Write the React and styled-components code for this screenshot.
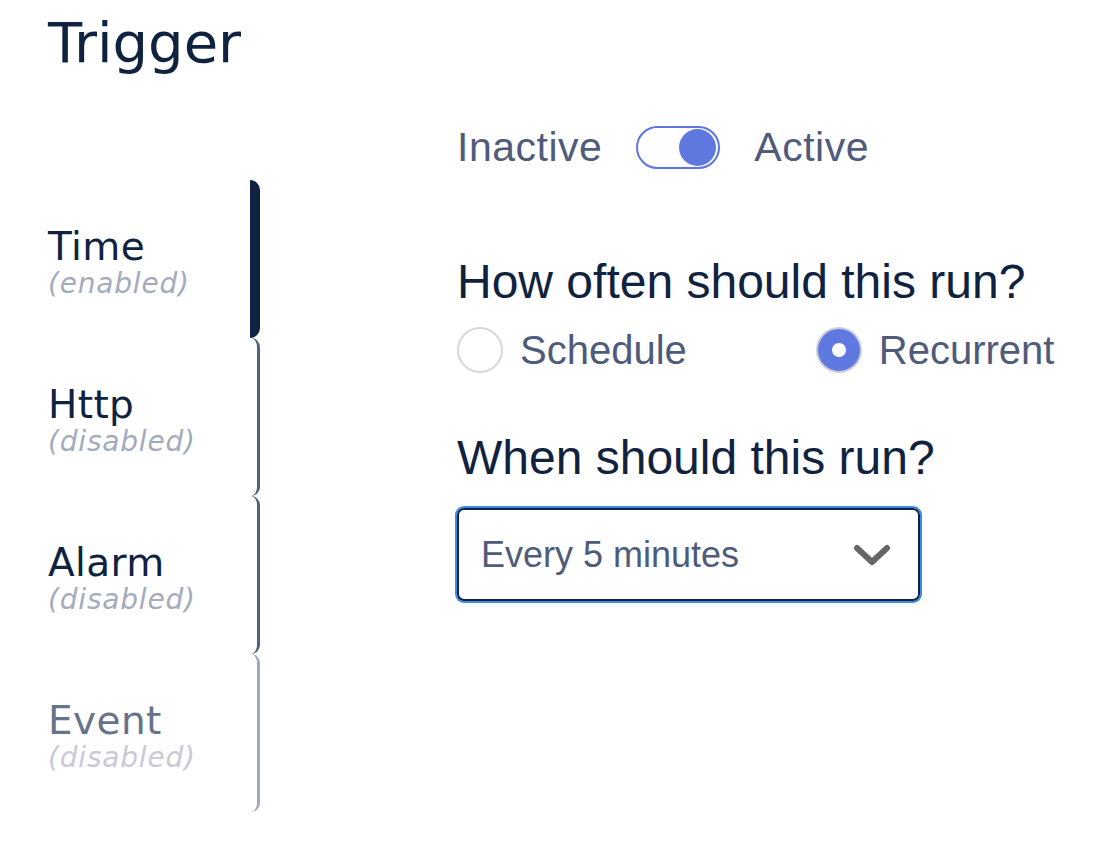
import React, { useState } from 'react'
import styled, { createGlobalStyle } from 'styled-components'

const GlobalStyle = createGlobalStyle`
    body {
        margin: 0;
        background: #ffffff;
    }
`

const tabs = [
    { name: 'Time', status: 'enabled', tone: 'active' },
    { name: 'Http', status: 'disabled', tone: 'normal' },
    { name: 'Alarm', status: 'disabled', tone: 'normal' },
    { name: 'Event', status: 'disabled', tone: 'muted' },
]

const App = () => {
    const [active, setActive] = useState(true)
    const [mode, setMode] = useState('recurrent')

    return (
        <Page>
            <GlobalStyle />
            <Title>Trigger</Title>
            <Body>
                <Nav>
                    {tabs.map(tab => (
                        <Tab key={tab.name} tone={tab.tone}>
                            <TabName tone={tab.tone}>{tab.name}</TabName>
                            <TabStatus tone={tab.tone}>({tab.status})</TabStatus>
                        </Tab>
                    ))}
                </Nav>
                <Content>
                    <ToggleRow>
                        <ToggleLabel>Inactive</ToggleLabel>
                        <Toggle on={active} onClick={() => setActive(!active)}>
                            <Knob on={active} />
                        </Toggle>
                        <ToggleLabel>Active</ToggleLabel>
                    </ToggleRow>

                    <Question>How often should this run?</Question>
                    <RadioRow>
                        <RadioOption onClick={() => setMode('schedule')}>
                            <RadioCircle checked={mode === 'schedule'} />
                            Schedule
                        </RadioOption>
                        <RadioOption onClick={() => setMode('recurrent')}>
                            <RadioCircle checked={mode === 'recurrent'} />
                            Recurrent
                        </RadioOption>
                    </RadioRow>

                    <Question second>When should this run?</Question>
                    <Select>
                        <SelectValue>Every 5 minutes</SelectValue>
                        <svg width="40" height="26" viewBox="0 0 40 26">
                            <polyline
                                points="5,6 20,20 35,6"
                                fill="none"
                                stroke="#666666"
                                strokeWidth="6"
                                strokeLinecap="round"
                                strokeLinejoin="round"
                            />
                        </svg>
                    </Select>
                </Content>
            </Body>
        </Page>
    )
}

export default App

const navFont = `"DejaVu Sans", "Noto Sans", sans-serif`
const formFont = `"Liberation Sans", Arial, sans-serif`

const Page = styled.div`
    padding: 11px 48px 0;
    color: #0f2340;
`
const Title = styled.h1`
    margin: 0;
    font-family: ${navFont};
    font-weight: 400;
    font-size: 56px;
    line-height: 64px;
    color: #0f2340;
`
const Body = styled.div`
    display: flex;
    align-items: flex-start;
`
const Nav = styled.div`
    width: 212px;
    padding-top: 105px;
    display: flex;
    flex-direction: column;
`
const Tab = styled.div`
    height: 158px;
    box-sizing: border-box;
    display: flex;
    flex-direction: column;
    justify-content: center;
    border-right: ${p => (p.tone === 'active' ? '10px' : '3px')} solid
        ${p => (p.tone === 'active' ? '#0f2340' : p.tone === 'muted' ? '#a0a8ba' : '#56617e')};
    border-radius: ${p => (p.tone === 'active' ? '0 10px 10px 0' : '0 9px 9px 0')};
    padding-top: 8px;
`
const TabName = styled.div`
    font-family: ${navFont};
    font-size: 39px;
    line-height: 42px;
    letter-spacing: 0.4px;
    color: ${p => (p.tone === 'muted' ? '#67738b' : '#0f2340')};
`
const TabStatus = styled.div`
    font-family: ${navFont};
    font-style: italic;
    font-size: 28px;
    line-height: 32px;
    letter-spacing: 0.8px;
    color: ${p => (p.tone === 'muted' ? '#c6cbd6' : '#a3abbd')};
`
const Content = styled.div`
    margin-left: 197px;
    padding-top: 51px;
    display: flex;
    flex-direction: column;
    font-family: ${formFont};
`
const ToggleRow = styled.div`
    display: flex;
    align-items: center;
    gap: 34px;
    height: 43px;
`
const ToggleLabel = styled.span`
    font-size: 41px;
    letter-spacing: 0.5px;
    color: #4f5b7a;
`
const Toggle = styled.button`
    width: 84px;
    height: 43px;
    box-sizing: border-box;
    border: 2px solid #5b76e0;
    border-radius: 22px;
    background: #ffffff;
    padding: 1px 2px;
    display: flex;
    align-items: center;
    justify-content: ${p => (p.on ? 'flex-end' : 'flex-start')};
    cursor: pointer;
`
const Knob = styled.span`
    width: 37px;
    height: 37px;
    border-radius: 50%;
    background: ${p => (p.on ? '#6079e0' : '#c8cdd8')};
`
const Question = styled.h2`
    margin: ${p => (p.second ? '56px' : '84px')} 0 0;
    font-family: ${formFont};
    font-weight: 400;
    font-size: 48px;
    line-height: 58px;
    color: #0f2340;
`
const RadioRow = styled.div`
    display: flex;
    gap: 129px;
    margin-top: 16px;
`
const RadioOption = styled.label`
    display: flex;
    align-items: center;
    gap: 17px;
    font-size: 40px;
    color: #4f5b7a;
    cursor: pointer;
`
const RadioCircle = styled.span`
    width: 46px;
    height: 46px;
    box-sizing: border-box;
    border-radius: 50%;
    border: 2px solid ${p => (p.checked ? '#c8cdd8' : '#d3d8e0')};
    background: ${p => (p.checked ? '#6079e0' : '#ffffff')};
    display: flex;
    align-items: center;
    justify-content: center;
    &::after {
        content: '';
        width: 14px;
        height: 14px;
        border-radius: 50%;
        background: #ffffff;
        display: ${p => (p.checked ? 'block' : 'none')};
    }
`
const Select = styled.div`
    margin-top: 21px;
    width: 463px;
    height: 93px;
    box-sizing: border-box;
    border: 2px solid #0f2340;
    border-radius: 7px;
    box-shadow: 0 0 0 2px #3b8beb;
    padding: 0 26px 0 22px;
    display: flex;
    align-items: center;
    justify-content: space-between;
`
const SelectValue = styled.span`
    font-size: 36px;
    color: #4f5b7a;
`
